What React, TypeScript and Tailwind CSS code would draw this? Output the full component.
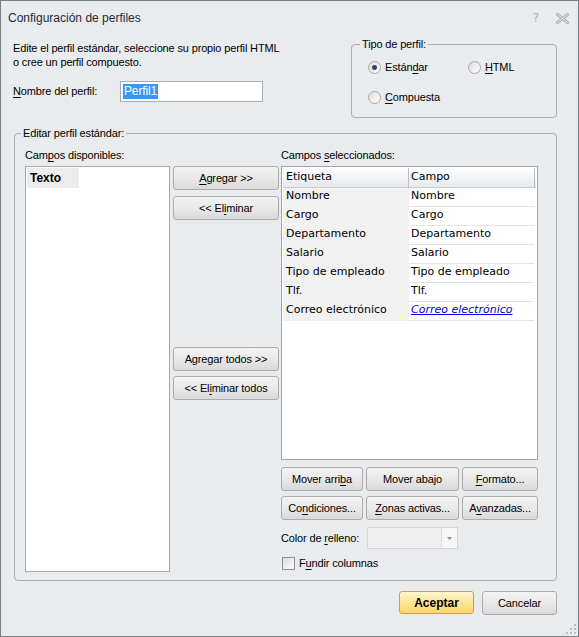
import type { ReactNode } from "react";

// mnemonic letter
function U({ c }: { c: string }) {
    return <span className="underline underline-offset-[2px]">{c}</span>;
}

function Btn({ children, className = "" }: { children: ReactNode; className?: string }) {
    return (
        <button
            className={`h-[24px] border border-[#acacac] rounded-[3px] bg-linear-to-b from-[#f3f3f3] via-[#e9e9e9] to-[#d9d9d9] text-[11px] text-black flex items-center justify-center ${className}`}
        >
            {children}
        </button>
    );
}

function Radio({ checked = false }: { checked?: boolean }) {
    return (
        <span className="w-[13px] h-[13px] rounded-full border border-[#b7a595] bg-linear-to-br from-[#dcdcdc] to-[#ffffff] flex items-center justify-center">
            {checked && <span className="w-[5px] h-[5px] rounded-full bg-[#2c4769]" />}
        </span>
    );
}

const rows = [
    ["Nombre", "Nombre"],
    ["Cargo", "Cargo"],
    ["Departamento", "Departamento"],
    ["Salario", "Salario"],
    ["Tipo de empleado", "Tipo de empleado"],
    ["Tlf.", "Tlf."],
];

export default function App() {
    return (
        <div className="w-[579px] h-[637px] bg-[#e9ecee] border border-[#7a7f85] flex flex-col relative text-[11px] tracking-[-0.15px] text-black font-['Liberation_Sans',Arial,sans-serif]">
            {/* title bar */}
            <div className="h-[34px] flex items-center pl-[7px] pr-[6px] shrink-0">
                <span className="text-[12px] tracking-normal text-[#1f2a37]">Configuración de perfiles</span>
                <span className="ml-auto mr-[17px] text-[12px] text-[#aab1b8] font-['DejaVu_Sans',sans-serif]">?</span>
                <svg width="13" height="11" viewBox="0 0 13 11" className="mr-[3px]">
                    <path d="M1.5 1.5 L11.5 9.5 M11.5 1.5 L1.5 9.5" stroke="#a9b0b7" strokeWidth="3" strokeLinecap="square" />
                    <path d="M1.5 1.5 L11.5 9.5 M11.5 1.5 L1.5 9.5" stroke="#eef0f2" strokeWidth="1" strokeLinecap="square" />
                </svg>
            </div>

            {/* top area */}
            <div className="flex h-[98px] shrink-0">
                <div className="w-[350px] pl-[12px] pt-[6px]">
                    <div className="leading-[14px]">Edite el perfil estándar, seleccione su propio perfil HTML</div>
                    <div className="leading-[14px]">o cree un perfil compuesto.</div>
                    <div className="mt-[12px] flex items-center h-[21px]">
                        <span className="w-[107px]">
                            <U c="N" />ombre del perfil:
                        </span>
                        <div className="w-[143px] h-[21px] border border-[#abadb3] bg-white pl-[2px] flex items-center">
                            <span className="bg-[#3399ff] text-white text-[12px] leading-[15px] px-[1px]">Perfil1</span>
                        </div>
                    </div>
                </div>
                <div className="mt-[9px] relative w-[206px] h-[74px] border border-[#a9aeb3] rounded-[4px]">
                    <span className="absolute left-[8px] top-[-8px] px-[2px] bg-[#e9ecee] leading-[14px]">Tipo de perfil:</span>
                    <div className="pl-[16px] pt-[15px] grid grid-cols-[100px_80px] gap-y-[16px]">
                        <div className="flex items-center gap-[4px] h-[14px]">
                            <Radio checked />
                            <span>
                                Están<U c="d" />ar
                            </span>
                        </div>
                        <div className="flex items-center gap-[4px] h-[14px]">
                            <Radio />
                            <span>
                                <U c="H" />TML
                            </span>
                        </div>
                        <div className="flex items-center gap-[4px] h-[14px]">
                            <Radio />
                            <span>
                                <U c="C" />ompuesta
                            </span>
                        </div>
                    </div>
                </div>
            </div>

            {/* main group */}
            <div className="ml-[13px] w-[543px] h-[448px] relative border border-[#a9aeb3] rounded-[4px] shrink-0">
                <span className="absolute left-[6px] top-[-8px] px-[2px] bg-[#e9ecee] leading-[14px]">Editar perfil estándar:</span>
                <div className="flex pl-[10px] pt-[14px]">
                    <div className="w-[145px] flex flex-col">
                        <div className="h-[14px] leading-[14px]">
                            Cam<U c="p" />os disponibles:
                        </div>
                        <div className="mt-[4px] h-[406px] border border-[#a5a9ae] bg-white p-[1px]">
                            <div className="w-[52px] h-[20px] bg-[#ececec] pl-[3px] flex items-center font-bold text-[12px] tracking-normal">
                                Texto
                            </div>
                        </div>
                    </div>

                    <div className="ml-[3px] w-[106px] pt-[18px] flex flex-col">
                        <Btn>
                            <span>
                                <U c="A" />gregar &gt;&gt;
                            </span>
                        </Btn>
                        <Btn className="mt-[6px]">
                            <span>
                                &lt;&lt; El<U c="i" />minar
                            </span>
                        </Btn>
                        <Btn className="mt-[127px]">Agregar todos &gt;&gt;</Btn>
                        <Btn className="mt-[5px]">
                            <span>
                                &lt;&lt; El<U c="i" />minar todos
                            </span>
                        </Btn>
                    </div>

                    <div className="ml-[2px] w-[257px] flex flex-col">
                        <div className="h-[14px] leading-[14px]">
                            Campos <U c="s" />eleccionados:
                        </div>
                        <div className="mt-[4px] h-[294px] border border-[#a0a4a9] bg-white p-[1px] font-['DejaVu_Sans',sans-serif] tracking-normal">
                            <div className="flex h-[20px] bg-linear-to-b from-[#ffffff] to-[#e6e9ed] border-b border-[#c9cdd2]">
                                <div className="w-[126px] pl-[3px] border-r border-[#b9bdc2] flex items-center">Etiqueta</div>
                                <div className="w-[126px] pl-[2px] border-r border-[#b9bdc2] flex items-center">Campo</div>
                            </div>
                            {rows.map(([a, b]) => (
                                <div key={a} className="flex h-[19px]">
                                    <div className="w-[126px] pl-[3px] pb-[2px] bg-[#f1f1f1] flex items-center">{a}</div>
                                    <div className="w-[125px] pl-[2px] pb-[2px] bg-white border-b border-[#e4e4e4] flex items-center">{b}</div>
                                </div>
                            ))}
                            <div className="flex h-[19px]">
                                <div className="w-[126px] pl-[3px] pb-[2px] bg-[#f1f1f1] flex items-center">Correo electrónico</div>
                                <div className="w-[125px] pl-[2px] pb-[2px] bg-white border-b border-[#e4e4e4] flex items-center italic underline text-[#0000ee]">
                                    Correo electrónico
                                </div>
                            </div>
                        </div>

                        <div className="mt-[7px] flex gap-[3px]">
                            <Btn className="w-[82px]">
                                <span>
                                    Mover arri<U c="b" />a
                                </span>
                            </Btn>
                            <Btn className="w-[93px]">
                                <span>
                                    Mover aba<U c="j" />o
                                </span>
                            </Btn>
                            <Btn className="w-[76px]">
                                <span>
                                    <U c="F" />ormato...
                                </span>
                            </Btn>
                        </div>
                        <div className="mt-[5px] flex gap-[3px]">
                            <Btn className="w-[82px]">
                                <span>
                                    Co<U c="n" />diciones...
                                </span>
                            </Btn>
                            <Btn className="w-[93px]">
                                <span>
                                    <U c="Z" />onas activas...
                                </span>
                            </Btn>
                            <Btn className="w-[76px]">
                                <span>
                                    A<U c="v" />anzadas...
                                </span>
                            </Btn>
                        </div>

                        <div className="mt-[7px] flex items-center h-[22px]">
                            <span className="w-[86px]">
                                Color de <U c="r" />elleno:
                            </span>
                            <div className="w-[91px] h-[22px] border border-[#d3d5d8] bg-[#f0f0f0] flex">
                                <div className="flex-1" />
                                <div className="w-[16px] border-l border-[#dcdee0] bg-[#f6f6f6] flex items-center justify-center">
                                    <svg width="5" height="3" viewBox="0 0 5 3">
                                        <path d="M0 0 H5 L2.5 3 Z" fill="#8a8d91" />
                                    </svg>
                                </div>
                            </div>
                        </div>

                        <div className="mt-[8px] flex items-center gap-[4px] h-[13px] pl-[1px]">
                            <span className="w-[13px] h-[13px] border border-[#8f9093] bg-linear-to-br from-[#dcdcdc] to-[#fbfbfb]" />
                            <span>
                                F<U c="u" />ndir columnas
                            </span>
                        </div>
                    </div>
                </div>
            </div>

            {/* footer */}
            <div className="mt-[10px] flex justify-end gap-[8px] pr-[21px]">
                <button className="w-[75px] h-[23px] border border-[#c7a24c] rounded-[3px] bg-linear-to-b from-[#fff6cf] via-[#fde597] to-[#fbd66e] font-bold text-[12px] tracking-normal flex items-center justify-center">
                    Aceptar
                </button>
                <Btn className="w-[75px] h-[23px]">Cancelar</Btn>
            </div>

            {/* resize grip */}
            <svg width="11" height="11" viewBox="0 0 11 11" className="absolute right-[2px] bottom-[2px]">
                {[
                    [9, 1],
                    [9, 5],
                    [5, 5],
                    [9, 9],
                    [5, 9],
                    [1, 9],
                ].map(([x, y]) => (
                    <rect key={`${x}-${y}`} x={x} y={y} width="2" height="2" fill="#b9bec3" />
                ))}
            </svg>
        </div>
    );
}
